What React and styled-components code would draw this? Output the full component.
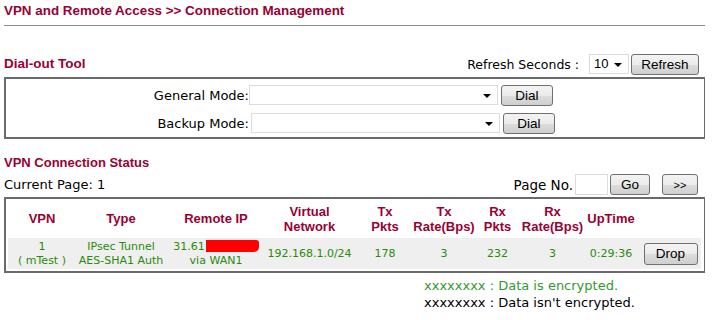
import React from "react";
import styled, { createGlobalStyle } from "styled-components";

const Global = createGlobalStyle`
  html, body { margin: 0; padding: 0; background: #fff; }
  body { font-family: "DejaVu Sans", Verdana, sans-serif; color: #000; }
`;

const MAROON = "#990033";

const Page = styled.div`
  width: 701px;
  margin-left: 4px;
`;

const Title = styled.h1`
  margin: 0;
  padding: 2px 0 5px 0;
  font: bold 13.4px/18px "Liberation Sans", Arial, sans-serif;
  color: ${MAROON};
  border-bottom: 1px solid #8c8c8c;
`;

const SectionBar = styled.div`
  display: flex;
  align-items: center;
  justify-content: space-between;
  height: ${(p) => p.$h || 22}px;
  margin-top: ${(p) => p.$mt || 0}px;
`;

const SectionTitle = styled.div`
  font: bold ${(p) => p.$size || 13}px/16px "Liberation Sans", Arial, sans-serif;
  color: ${MAROON};
`;

const Label = styled.span`
  font-size: ${(p) => p.$size || 13}px;
  white-space: pre;
`;

const Controls = styled.div`
  display: flex;
  align-items: center;
  gap: ${(p) => p.$gap || 2}px;
  padding-right: ${(p) => p.$pr || 0}px;
  padding-left: ${(p) => p.$pl || 0}px;
`;

const Button = styled.button`
  height: ${(p) => p.$h || 21}px;
  width: ${(p) => p.$w}px;
  padding: 0;
  border: 1px solid #707070;
  border-radius: 3px;
  background: linear-gradient(#f3f3f3 0%, #ebebeb 50%, #dddddd 51%, #cfcfcf 100%);
  font: 13.5px "Liberation Sans", Arial, sans-serif;
  color: #000;
  margin-left: ${(p) => p.$ml || 0}px;
`;

const SmallButton = styled(Button)`
  font-size: 11px;
`;

const SelectBox = styled.div`
  position: relative;
  box-sizing: border-box;
  width: ${(p) => p.$w}px;
  height: 20px;
  border: 1px solid #dcdcdc;
  background: #fff;
  font: 13px/18px "Liberation Sans", Arial, sans-serif;
  padding-left: 4px;
  &::after {
    content: "";
    position: absolute;
    right: 6px;
    top: 8px;
    border-left: 4px solid transparent;
    border-right: 4px solid transparent;
    border-top: 4px solid #000;
  }
`;

const TextInput = styled.div`
  box-sizing: border-box;
  width: 33px;
  height: 21px;
  border: 1px solid #dcdcdc;
  background: #fff;
`;

const Box = styled.div`
  box-sizing: border-box;
  border-style: solid;
  border-color: #6a6a6a;
  border-width: 2px 1px 2px 2px;
  margin-top: ${(p) => p.$mt || 0}px;
`;

const DialBox = styled(Box)`
  height: 62px;
  padding: 5px 0 0 0;
  display: grid;
  grid-template-columns: 243px auto;
  grid-auto-rows: 22px;
  row-gap: 6px;
  align-items: center;
`;

const DialLabel = styled.div`
  text-align: right;
  font-size: 13px;
  white-space: pre;
`;

const Grid = styled.div`
  display: grid;
  grid-template-columns: 68px 90px 100px 87px 64px 54px 53px 57px 60px 59px;
  margin: 0 3px 0 2px;
  align-items: center;
  justify-items: center;
`;

const HeadRow = styled(Grid)`
  height: 39px;
`;

const DataRow = styled(Grid)`
  height: 31px;
  background: #efefef;
  margin-bottom: 2px;
`;

const Head = styled.div`
  justify-self: center;
  width: max-content;
  text-align: center;
  font: bold 13px/15px "Liberation Sans", Arial, sans-serif;
  color: ${MAROON};
`;

const Cell = styled.div`
  justify-self: center;
  width: max-content;
  text-align: center;
  font: 11px/14px "DejaVu Sans", Verdana, sans-serif;
  color: #2a8a0a;
`;

const Redact = styled.span`
  display: inline-block;
  width: 53px;
  height: 12px;
  background: #ff0000;
  border-radius: 0 3px 5px 0;
  vertical-align: -2px;
  margin-left: 1px;
`;

const IpLine = styled.div`
  text-align: left;
`;

const Legend = styled.div`
  margin: 4px 0 0 420px;
  font-size: 13px;
  line-height: 17px;
`;

const LegendLine = styled.div`
  color: ${(p) => (p.$enc ? "#339933" : "#000")};
`;

const headers = [
  ["VPN"],
  ["Type"],
  ["Remote IP"],
  ["Virtual", "Network"],
  ["Tx", "Pkts"],
  ["Tx", "Rate(Bps)"],
  ["Rx", "Pkts"],
  ["Rx", "Rate(Bps)"],
  ["UpTime"],
];

export default function App() {
  return (
    <>
      <Global />
      <Page>
        <Title>VPN and Remote Access &gt;&gt; Connection Management</Title>

        <SectionBar $mt={27}>
          <SectionTitle $size={13.5}>Dial-out Tool</SectionTitle>
          <Controls $gap={2} $pr={6}>
            <Label $size={12.5}>Refresh Seconds :  </Label>
            <SelectBox $w={40}>10</SelectBox>
            <Button $w={68}>Refresh</Button>
          </Controls>
        </SectionBar>

        <DialBox $mt={2}>
          <DialLabel>General Mode:</DialLabel>
          <Controls $gap={3}>
            <SelectBox $w={249} />
            <Button $w={52}>Dial</Button>
          </Controls>
          <DialLabel>Backup Mode:</DialLabel>
          <Controls $gap={3} $pl={2}>
            <SelectBox $w={249} />
            <Button $w={52}>Dial</Button>
          </Controls>
        </DialBox>

        <SectionBar $mt={15} $h={17}>
          <SectionTitle>VPN Connection Status</SectionTitle>
        </SectionBar>

        <SectionBar $mt={2} $h={23}>
          <Label>Current Page: 1</Label>
          <Controls $gap={2} $pr={7}>
            <Label $size={13.5}>Page No.</Label>
            <TextInput />
            <Button $w={40}>Go</Button>
            <SmallButton $w={36} $ml={10}>&gt;&gt;</SmallButton>
          </Controls>
        </SectionBar>

        <Box $mt={1}>
          <HeadRow>
            {headers.map((h, i) => (
              <Head key={i}>
                {h.map((t, j) => (
                  <div key={j}>{t}</div>
                ))}
              </Head>
            ))}
            <div />
          </HeadRow>
          <DataRow>
            <Cell>
              1<br />( mTest )
            </Cell>
            <Cell>
              IPsec Tunnel
              <br />
              AES-SHA1 Auth
            </Cell>
            <Cell>
              <IpLine>
                31.61<Redact />
              </IpLine>
              <div>via WAN1</div>
            </Cell>
            <Cell>192.168.1.0/24</Cell>
            <Cell>178</Cell>
            <Cell>3</Cell>
            <Cell>232</Cell>
            <Cell>3</Cell>
            <Cell>0:29:36</Cell>
            <Button $w={54} $h={22}>Drop</Button>
          </DataRow>
        </Box>

        <Legend>
          <LegendLine $enc>xxxxxxxx : Data is encrypted.</LegendLine>
          <LegendLine>xxxxxxxx : Data isn't encrypted.</LegendLine>
        </Legend>
      </Page>
    </>
  );
}
